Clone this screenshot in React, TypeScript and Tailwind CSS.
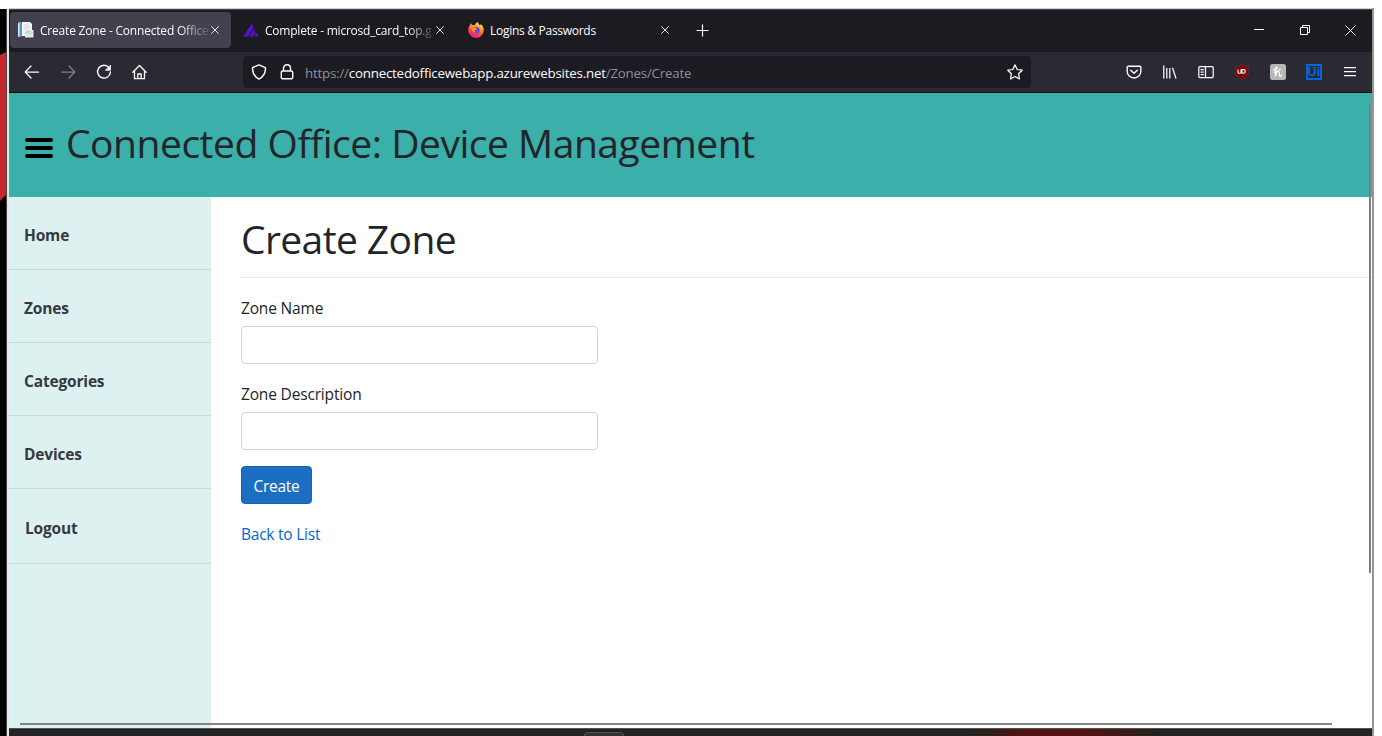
import type { ReactNode } from "react";

const uiFont = "font-['Open_Sans','Noto_Sans',sans-serif]";

function Icon({ children, className = "" }: { children: ReactNode; className?: string }) {
  return (
    <svg
      viewBox="0 0 16 16"
      className={`size-4 shrink-0 ${className}`}
      fill="none"
      stroke="#fbfbfe"
      strokeWidth="1.25"
      strokeLinecap="round"
      strokeLinejoin="round"
    >
      {children}
    </svg>
  );
}

function ToolButton({ children }: { children: ReactNode }) {
  return <button className="flex h-8 w-9 shrink-0 items-center justify-center">{children}</button>;
}

function TabClose() {
  return (
    <svg viewBox="0 0 8 8" className="size-2 shrink-0" stroke="#e6e6ea" strokeWidth="1" fill="none">
      <path d="M.3.3l7.4 7.4M7.7.3L.3 7.7" />
    </svg>
  );
}

function DocumentsIcon() {
  return (
    <svg viewBox="0 0 16 16" className="size-4 shrink-0">
      <path d="M0 1l3-1v14l-3 1z" fill="#d9edf6" />
      <path d="M1.5 1h3v13.500h-3z" fill="#4b9bd3" />
      <path d="M4 0h8l2 2v12H4z" fill="#f3f4f5" />
      <path d="M6 3h5M6 5h6M6 7h5" stroke="#c7cdd1" strokeWidth=".7" />
      <path d="M7 8h8.500v7.500H7z" fill="#e3e8ea" />
      <path d="M7 11h8.500M9 9.500h4" stroke="#b8c2c6" strokeWidth=".7" />
    </svg>
  );
}

function StripesIcon() {
  return (
    <svg viewBox="0 0 16 14" className="h-3.5 w-4 shrink-0" fill="#5b12d6">
      <path d="M.2 13.400L9.300.3l.9 4.800-5.400 8.300z" />
      <path d="M6 13.400l5.500-8 .8 4-2.700 4z" />
      <circle cx="13.600" cy="12" r="1.700" />
    </svg>
  );
}

function FirefoxIcon() {
  return (
    <svg viewBox="0 0 16 16" className="size-4 shrink-0">
      <defs>
        <linearGradient id="flame" x1="0.800" y1="0" x2="0.300" y2="1">
          <stop offset="0" stopColor="#fff44f" />
          <stop offset=".35" stopColor="#ffa02b" />
          <stop offset=".65" stopColor="#ff4a3f" />
          <stop offset="1" stopColor="#e31587" />
        </linearGradient>
      </defs>
      <path
        d="M10 0c.2 1.800 1.100 2.600 2 3.300.5-.2.700-.8.600-1.300 2 1.500 3.200 3.800 3.200 6.300A7.800 7.800 0 0 1 8 16 7.800 7.800 0 0 1 .2 8.200C.2 6 1 4.200 2 3l.4-1.700c.8.500 1.400 1.100 1.800 1.800.8-.3 1.700-.2 2.700 0C7.200 1.800 8.500.6 10 0z"
        fill="url(#flame)"
      />
      <circle cx="8.200" cy="8.300" r="3.500" fill="#7542e5" />
      <path d="M3.300 5.500c1.500-.9 3.300-.5 4.300.7.800 0 1.200.1 1.500.5-.5 1-1.700 1-2.300 1.700-.3.700-.1 1.500.8 1.900-2.200.6-4.100-.9-4.300-4.800z" fill="#ff9426" />
    </svg>
  );
}

function TabStrip() {
  return (
    <div className={`flex h-[42px] shrink-0 items-start bg-[#1c1b22] text-[12px] text-[#fbfbfe] ${uiFont}`}>
      <div className="ml-px mt-0.5 flex h-9 w-[221px] items-center rounded bg-[#42414d] pl-2">
        <DocumentsIcon />
        <span className="ml-1.5 mt-0.5 w-[169px] whitespace-nowrap tracking-[-0.2px] [mask-image:linear-gradient(to_right,#000_82%,transparent_102%)]">
          Create Zone - Connected Office
        </span>
        <span className="ml-0.5 flex"><TabClose /></span>
      </div>
      <div className="mt-0.5 flex h-9 w-[225px] items-center pl-3">
        <StripesIcon />
        <span className="ml-1.5 mt-0.5 w-[169px] whitespace-nowrap tracking-[-0.22px] [mask-image:linear-gradient(to_right,#000_84%,transparent_102%)]">
          Complete - microsd_card_top.g
        </span>
        <span className="ml-0.5 flex"><TabClose /></span>
      </div>
      <div className="mt-0.5 flex h-9 w-[225px] items-center pl-3">
        <FirefoxIcon />
        <span className="ml-1.5 mt-0.5 w-[169px] whitespace-nowrap tracking-[-0.28px]">Logins &amp; Passwords</span>
        <span className="ml-0.5 flex"><TabClose /></span>
      </div>
      <button className="mt-0.5 flex h-9 w-[43px] items-center justify-center">
        <svg viewBox="0 0 13 13" className="size-[13px]" stroke="#fbfbfe" strokeWidth="1.200">
          <path d="M6.500.5v12M.5 6.500h12" />
        </svg>
      </button>
      <div className="ml-auto flex pr-[9px]">
        <span className="flex h-10 w-[46px] items-center justify-center">
          <svg viewBox="0 0 10 10" className="size-2.5" stroke="#fff"><path d="M0 4.500h10" /></svg>
        </span>
        <span className="flex h-10 w-[46px] items-center justify-center">
          <svg viewBox="0 0 10 10" className="size-2.5" stroke="#fff" fill="none">
            <path d="M.5 2.500h7v7h-7zM2.500 2V.5h7v7H8" />
          </svg>
        </span>
        <span className="flex h-10 w-[35px] items-center justify-center pl-2.5">
          <svg viewBox="0 0 11 11" className="size-[11px]" stroke="#fff"><path d="M.5.5l10 10M10.500.5l-10 10" /></svg>
        </span>
      </div>
    </div>
  );
}

function Toolbar() {
  return (
    <div className="flex h-[41px] shrink-0 items-center border-b border-[#0c0c0d] bg-[#2b2a33] pl-[5px] pr-1">
      <ToolButton><Icon><path d="M14.500 8H1.500M7 2L1.200 8 7 14" /></Icon></ToolButton>
      <ToolButton><Icon className="opacity-40"><path d="M1.500 8h13M9 2l5.800 6L9 14" /></Icon></ToolButton>
      <ToolButton>
        <Icon>
          <path d="M13 3.700A6.400 6.400 0 1 0 14.400 8" strokeWidth="1.400" />
          <path d="M14.500 1.500v4.700H9.800z" fill="#fbfbfe" strokeWidth=".8" />
        </Icon>
      </ToolButton>
      <ToolButton>
        <Icon>
          <path d="M.8 8.300L7.500 1.500l6.700 6.800M2.500 7v7.700h10V7M5.800 14.500V10h3.400v4.500" strokeWidth="1.300" />
        </Icon>
      </ToolButton>
      <div className="ml-[85px] flex h-8 w-[788px] items-center rounded bg-[#1c1b22] px-2">
        <Icon><path d="M8 .9l6.400 2.700c.4 5.200-1.600 9-6.400 11.500C3.200 12.600 1.200 8.800 1.600 3.600z" strokeWidth="1.500" /></Icon>
        <Icon className="ml-3">
          <path d="M4.500 7V4.300C4.500 2.200 6 .8 8 .8s3.500 1.400 3.500 3.500V7M3.500 7h9c.7 0 1.200.5 1.200 1.200v5.300c0 .7-.5 1.200-1.200 1.200h-9c-.7 0-1.200-.5-1.200-1.200V8.200C2.300 7.500 2.800 7 3.500 7z" strokeWidth="1.400" />
        </Icon>
        <span className={`ml-2.5 mt-[3px] whitespace-nowrap text-[13.300px] tracking-[-0.2px] text-[#8f8f98] ${uiFont}`}>
          https://<span className="text-[#fbfbfe]">connectedofficewebapp.azurewebsites.net</span>/Zones/Create
        </span>
        <Icon className="ml-auto">
          <path d="M8 .8l2.200 4.700 5 .7-3.600 3.600.9 5.200L8 12.500 3.500 15l.9-5.200L.8 6.200l5-.7z" />
        </Icon>
      </div>
      <div className="ml-auto flex">
        <ToolButton>
          <Icon><path d="M2.200 2.200h11.600c.6 0 1 .4 1 1V7.500a6.800 6.500 0 0 1-13.600 0V3.200c0-.6.4-1 1-1zM4.700 6.200L8 9.300l3.300-3.100" strokeWidth="1.400" /></Icon>
        </ToolButton>
        <ToolButton>
          <Icon><path d="M1.800 1.500v13M4.800 4v10.500M7.800 4v10.500M10.500 3.800L14 14.500" strokeLinecap="butt" /></Icon>
        </ToolButton>
        <ToolButton>
          <Icon><path d="M1.800 2.500h12.400c.6 0 1 .4 1 1v9c0 .6-.4 1-1 1H1.800c-.6 0-1-.4-1-1v-9c0-.6.4-1 1-1zM7.500 2.500v11M3 5.500h2.300M3 8h2.300M3 10.500h2.300" /></Icon>
        </ToolButton>
        <ToolButton>
          <svg viewBox="0 0 16 16" className="size-4" fill="none">
            <path d="M8 .4c2 1.400 4.300 2 6.600 2v5c0 4-3 6.500-6.600 8.200C4.400 13.900 1.400 11.400 1.400 7.400v-5C3.700 2.400 6 1.800 8 .4z" fill="#7f0308" stroke="#55424a" strokeWidth=".6" />
            <path d="M4 5.600v2.600c0 1.400 3 1.400 3 0V5.600M7.700 5.600h1.800a1.800 1.800 0 0 1 0 3.600H8.200z" stroke="#fff" strokeWidth="1.100" />
          </svg>
        </ToolButton>
        <ToolButton>
          <svg viewBox="0 0 16 16" className="size-4" fill="none">
            <rect width="16" height="16" rx="2.500" fill="#b7b7b7" />
            <path d="M3.600 5.600c2 0 3.600-.8 3.600-2 0-1-1.300-.8-1.500 1.400l-.3 7.200c.6-3.200 1.800-5 3.300-4.700 1.800.5-.3 4.100 1 4.600.8.200 1.400-.3 1.900-1M4 8.200c2.200 0 4.600-1 6.400-3" stroke="#fff" strokeWidth="1.200" strokeLinecap="round" />
          </svg>
        </ToolButton>
        <ToolButton>
          <span className="flex size-4 items-center justify-center border-2 border-[#0067df] font-['Liberation_Sans',sans-serif] text-[12px] font-bold leading-none tracking-[0.2px] text-[#0067df]">
            Ui
          </span>
        </ToolButton>
        <ToolButton>
          <Icon><path d="M2 3.500h12M2 7.500h12M2 11.500h12" strokeLinecap="butt" /></Icon>
        </ToolButton>
      </div>
    </div>
  );
}

function SideLink({ label, last = false }: { label: string; last?: boolean }) {
  const box = last ? "h-[75px] pl-4 pt-[27px]" : "h-[73px] pl-[15px] pt-[26px]";
  return (
    <a className={`block border-b border-[#c5dad9] text-[15.500px] font-bold leading-6 tracking-[-0.17px] text-[#343a40] ${box}`}>
      {label}
    </a>
  );
}

function Field({ id, label }: { id: string; label: string }) {
  return (
    <div className="mb-4">
      <label htmlFor={id} className="mb-[5px] block pt-px text-[15.500px] leading-[26px] tracking-[-0.17px]">
        {label}
      </label>
      <input id={id} className="block h-[38px] w-[357px] rounded border border-[#ced4da] bg-white px-3 outline-none" />
    </div>
  );
}

function Page() {
  return (
    <div className={`flex min-h-0 flex-1 flex-col bg-white text-[#212529] ${uiFont}`}>
      <header className="flex h-[104px] shrink-0 items-center bg-[#3bafaa] pl-4">
        <div className="mt-1.5 flex w-7 flex-col gap-1">
          <span className="h-1 rounded-full bg-black" />
          <span className="h-1 rounded-full bg-black" />
          <span className="h-1 rounded-full bg-black" />
        </div>
        <h1 className="-mt-1 ml-[13px] whitespace-nowrap text-[39px] font-normal leading-[48px] tracking-[-0.47px]">
          Connected Office: Device Management
        </h1>
      </header>
      <div className="flex min-h-0 flex-1">
        <nav className="w-[202px] shrink-0 bg-[#ddf1f0]">
          <SideLink label="Home" />
          <SideLink label="Zones" />
          <SideLink label="Categories" />
          <SideLink label="Devices" />
          <SideLink label="Logout" last />
        </nav>
        <main className="flex-1 pl-[30px]">
          <h1 className="h-[81px] border-b border-[#e5e5e5] pt-[18px] text-[39px] font-normal leading-[48px] tracking-[-0.6px]">
            Create Zone
          </h1>
          <form className="pt-[16px]">
            <Field id="zone-name" label="Zone Name" />
            <Field id="zone-description" label="Zone Description" />
            <button type="button" className="block h-[38px] w-[71px] rounded border border-[#1861ac] bg-[#1b6ec2] pt-1 text-[15.500px] tracking-[-0.25px] text-white">
              Create
            </button>
          </form>
          <a className="mt-[18px] block text-[15.500px] leading-6 tracking-[-0.23px] text-[#0366d6]">Back to List</a>
        </main>
      </div>
    </div>
  );
}

export default function App() {
  return (
    <div className="relative flex h-[736px] w-[1382px] overflow-hidden bg-white pt-2">
      <svg viewBox="0 0 7 727" className="mt-px h-[727px] w-[7px] shrink-0">
        <path d="M0 0h7v727H0z" fill="#000" />
        <path d="M0 46l6-3v143l-6 6z" fill="#c5282b" />
        <path d="M6 0h1v727H6z" fill="#444" />
      </svg>
      <div className="flex w-[1367px] flex-col border-l-2 border-r-2 border-l-[#e8e6e8] border-r-[#969696]">
        <div className="h-px shrink-0 bg-[#d0d0d0]" />
        <div className="h-px shrink-0 bg-[#454548]" />
        <TabStrip />
        <Toolbar />
        <Page />
        <div className="flex h-2 shrink-0 justify-center border-t border-[#505050] bg-[linear-gradient(to_right,#222_70.500%,#541211_75%,#541211_79%,#222_84.500%)]">
          <div className="mr-[174px] mt-[3px] h-1 w-10 rounded-t border border-b-0 border-[#505050] bg-[#333]" />
        </div>
      </div>
      <div className="absolute left-[1369px] top-[105px] h-[468px] w-0.5 bg-[#7b8180]" />
      <div className="absolute left-5 top-[723px] h-0.5 w-[1312px] bg-[#858585]" />
    </div>
  );
}
